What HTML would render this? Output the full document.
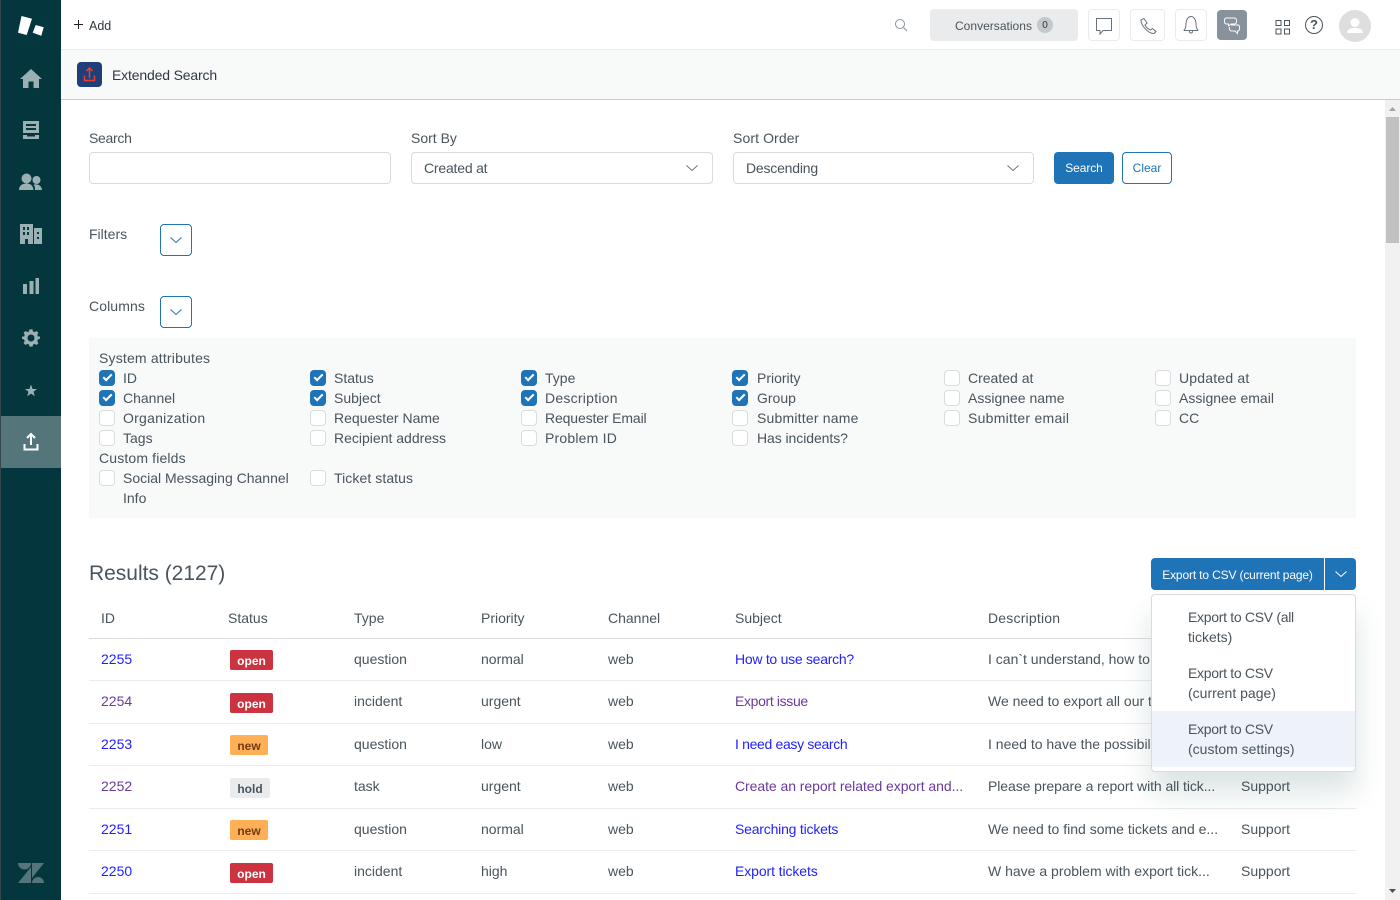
<!DOCTYPE html>
<html>
<head>
<meta charset="utf-8">
<style>
html,body{margin:0;padding:0;width:1400px;height:900px;overflow:hidden;background:#fff;font-family:"Liberation Sans",sans-serif;font-size:14px;color:#49545c}
.t{position:absolute;white-space:nowrap;line-height:20px;height:20px}
.b{position:absolute;box-sizing:border-box}
svg{position:absolute;overflow:visible}
.cb{position:absolute;width:16px;height:16px;box-sizing:border-box;border:1px solid #d8dcde;border-radius:4px;background:#fff}
.cb.c{background:#1f73b7;border-color:#1f73b7}
.cb.c::after{content:"";position:absolute;left:3px;top:3px;width:7px;height:3px;border-left:2px solid #fff;border-bottom:2px solid #fff;transform:rotate(-45deg)}
.ln{position:absolute;left:89px;width:1267px;height:1px;background:#e9ebed}
.a{color:#1f1fff}.v{color:#6a3a9c}
.bd{position:absolute;left:230px;height:20px;line-height:22px;border-radius:2px;font-weight:bold;font-size:12px;text-align:center;box-sizing:border-box}
.open{width:43px;background:#cc3340;color:#fff}
.new{width:38px;background:#ffb057;color:#703b15}
.hold{width:40px;background:#e9ebed;color:#49545c}
.ck{fill:none;stroke:#1f73b7;stroke-width:1}
.ic{fill:none;stroke:#68737d;stroke-width:1}
.sb{fill:#9ab0b3}
</style>
</head>
<body>
<!-- sidebar -->
<div class="b" style="left:0;top:0;width:61px;height:900px;background:#03363d"></div>
<div class="b" style="left:0;top:0;width:1px;height:900px;background:#33474a"></div>
<div class="b" style="left:1px;top:416px;width:60px;height:52px;background:#54767a"></div>
<svg style="left:0;top:0" width="61" height="900">
<path d="M21.500 16L32 18.700L26.700 35L18 32.700z" fill="#fff"/>
<path d="M35.700 25L43.700 27.300L41.300 35.700L32.700 32.700z" fill="#fff"/>
<path class="sb" d="M31 69L42 79H39V88H33.500V81.500H28.500V88H23V79H20z"/>
<path class="sb" d="M23 121H39V133H23zM26 124V126H36V124zM26 128V130H36V128zM23 135H27V136.500H35V135H39V139H23z" fill-rule="evenodd"/>
<circle class="sb" cx="26.500" cy="178.500" r="5"/><circle class="sb" cx="36.500" cy="180" r="4"/>
<path class="sb" d="M19 190C19 185 23 183.500 26.500 183.500C30 183.500 33 185 33.500 190zM35 190C35 187 34.500 185.500 33.500 184.500C37 183.500 41.500 185 42 190z"/>
<path class="sb" d="M20 224H33V244H20zM34 228H42V244H34z"/>
<path d="M23 227h2v3h-2zM27 227h2v3h-2zM23 232h2v3h-2zM27 232h2v3h-2zM37 232h2v2h-2zM37 237h2v2h-2zM25 239h3v5h-3z" fill="#03363d"/>
<path class="sb" d="M23 284H27V294H23zM29.500 281H33.500V294H29.500zM35.500 278H39V294H35.500z"/>
<path class="sb" fill-rule="evenodd" transform="translate(31,338) scale(.78) translate(-31,-340)" d="M29 329H33L33.500 331.500L35.500 332.500L38 331L40.500 333.500L39 336L39.800 338H42.500V341L39.800 342L39 344L40.500 346.500L38 349L35.500 347.500L33.500 348.500L33 351H29L28.500 348.500L26.500 347.500L24 349L21.500 346.500L23 344L22 342L19.500 341V338L22 338L23 336L21.500 333.500L24 331L26.500 332.500L28.500 331.500zM31 335.500A4.500 4.500 0 1 0 31 344.500A4.500 4.500 0 1 0 31 335.500z"/>
<path class="sb" d="M31 384.500L32.600 389H37L33.500 391.800L34.800 396.200L31 393.600L27.200 396.200L28.500 391.800L25 389H29.400z"/>
<path d="M31 434V445M27 438L31 434L35 438M24.500 444V449.500H37.500V444" fill="none" stroke="#fff" stroke-width="2"/>
<path d="M18 863H31A6.500 6.500 0 0 1 18 863zM18 883L31 867V883zM32 878V863H44zM32 883A6 6 0 0 1 44 883z" fill="#54767a"/>
</svg>

<!-- top bar -->
<div class="b" style="left:61px;top:49px;width:1339px;height:1px;background:#e9ebed"></div>
<svg style="left:74px;top:20px" width="10" height="10"><path d="M4.500 0V9M0 4.500H9" stroke="#222" fill="none"/></svg>
<div class="t" style="left:89px;top:16px;font-size:12.500px;color:#2f3941">Add</div>
<svg style="left:894px;top:18px" width="14" height="14"><circle cx="6" cy="6" r="4.500" fill="none" stroke="#87929d"/><path d="M9.500 9.500L13 13" stroke="#87929d"/></svg>
<div class="b" style="left:930px;top:9px;width:148px;height:32px;background:#e9ebed;border-radius:4px"></div>
<div class="t" style="left:955px;top:16px;font-size:12px;letter-spacing:.02px;color:#49545c">Conversations</div>
<div class="b" style="left:1037px;top:17px;width:16px;height:16px;border-radius:8px;background:#c2c8cc;text-align:center;line-height:17px;font-size:10px;color:#2f3941">0</div>
<div class="b" style="left:1088px;top:9px;width:32px;height:32px;border:1px solid #e9ebed;border-radius:4px"></div>
<div class="b" style="left:1130px;top:9px;width:35px;height:32px;border:1px solid #e9ebed;border-radius:4px"></div>
<div class="b" style="left:1175px;top:9px;width:32px;height:32px;border:1px solid #e9ebed;border-radius:4px"></div>
<div class="b" style="left:1217px;top:10px;width:30px;height:30px;background:#87929d;border-radius:4px"></div>
<svg style="left:0;top:0" width="1400" height="50">
<path class="ic" d="M1096.500 18.500H1111.500V30.500H1103L1100 34V30.500H1096.500z"/>
<path class="ic" d="M1141 20L1144 18.500L1147 23L1145 25C1146 27 1148 29 1150.500 30L1152.500 28.500L1156 31.500L1154 33.500C1149 34 1141 26 1141 20zM1144 18.500L1147 23M1152.500 28.500L1156 31.500"/>
<path class="ic" d="M1184.500 29.500C1186 28 1186 25.500 1186 23.500C1186 20 1188 16.500 1191 16.500C1194 16.500 1196 20 1196 23.500C1196 25.500 1196 28 1197.500 29.500C1198.500 30.500 1198 30.500 1197 30.500H1185C1184 30.500 1183.500 30.500 1184.500 29.500zM1189.500 30.500V31.500A1.500 1.500 0 0 0 1192.500 31.500V30.500"/>
<path d="M1226.500 18H1234C1235.500 18 1236.500 19 1236.500 20.500V21.500C1236.500 23 1235.500 24 1234 24H1231L1228.500 26V24H1226.500C1225 24 1224.500 23 1224.500 21.500V20.500C1224.500 19 1225 18 1226.500 18z" fill="none" stroke="#fff" stroke-width=".9"/>
<path d="M1231 25H1237.500C1239 25 1239.500 26 1239.500 27V28.500C1239.500 30 1239 31 1237.500 31V33.500L1235 31H1231.500C1230 31 1229.500 30 1229.500 28.500V27" fill="none" stroke="#fff" stroke-width=".9"/>
<path d="M1276 20.500h5v5h-5zM1284.500 20.500h5v5h-5zM1276 29h5v5h-5zM1284.500 29h5v5h-5z" fill="none" stroke="#49545c"/>
<circle cx="1314" cy="25" r="8.500" fill="none" stroke="#49545c"/>
</svg>
<div class="t" style="left:1310px;top:15px;font-size:13px;color:#49545c;font-weight:bold">?</div>
<div class="b" style="left:1339px;top:10px;width:32px;height:32px;border-radius:16px;background:#dedede"></div>
<svg style="left:1339px;top:10px" width="32" height="32"><circle cx="16" cy="12.500" r="4.500" fill="#fff"/><path d="M8 23C8 19 12 18 16 18C20 18 24 19 24 23z" fill="#fff"/></svg>

<!-- sub header -->
<div class="b" style="left:61px;top:50px;width:1339px;height:50px;background:#f8f9f9;border-bottom:1px solid #c9cccd"></div>
<div class="b" style="left:77px;top:62px;width:25px;height:25px;background:#1f3f7a;border-radius:4px"></div>
<svg style="left:77px;top:62px" width="25" height="25"><path d="M12.500 6V16M9.500 9L12.500 6L15.500 9M7.500 13.500V18.500H17.500V13.500" fill="none" stroke="#e8402f" stroke-width="1.500"/></svg>
<div class="t" style="left:112px;top:65px;color:#2f3941;letter-spacing:-.16px">Extended Search</div>

<!-- form -->
<div class="t" style="left:89px;top:128px;letter-spacing:-.3px">Search</div>
<div class="t" style="left:411px;top:128px">Sort By</div>
<div class="t" style="left:733px;top:128px;letter-spacing:.1px">Sort Order</div>
<div class="b" style="left:89px;top:152px;width:302px;height:32px;border:1px solid #d8dcde;border-radius:4px"></div>
<div class="b" style="left:411px;top:152px;width:302px;height:32px;border:1px solid #d8dcde;border-radius:4px"></div>
<div class="b" style="left:733px;top:152px;width:301px;height:32px;border:1px solid #d8dcde;border-radius:4px"></div>
<div class="t" style="left:424px;top:158px;letter-spacing:-.2px">Created at</div>
<div class="t" style="left:746px;top:158px;letter-spacing:-.2px">Descending</div>
<svg style="left:0;top:0" width="1400" height="340">
<path d="M686.500 165.500L692 170.500L697.500 165.500M1007.500 165.500L1013 170.500L1018.500 165.500" fill="none" stroke="#68737d"/>
<path class="ck" d="M170.500 237.500L176 242.500L181.500 237.500M170.500 309.500L176 314.500L181.500 309.500"/>
</svg>
<div class="b" style="left:1054px;top:152px;width:60px;height:32px;background:#1f73b7;border-radius:4px;color:#fff;text-align:center;line-height:33px;font-size:12px;letter-spacing:-.1px">Search</div>
<div class="b" style="left:1122px;top:152px;width:50px;height:32px;border:1px solid #1f73b7;border-radius:4px;color:#1f73b7;text-align:center;line-height:31px;font-size:12px">Clear</div>
<div class="t" style="left:89px;top:224px">Filters</div>
<div class="b" style="left:160px;top:224px;width:32px;height:32px;border:1px solid #1f73b7;border-radius:4px"></div>
<div class="t" style="left:89px;top:296px;letter-spacing:.1px">Columns</div>
<div class="b" style="left:160px;top:296px;width:32px;height:32px;border:1px solid #1f73b7;border-radius:4px"></div>

<!-- columns panel -->
<div class="b" style="left:89px;top:338px;width:1267px;height:180px;background:#f8f9f9"></div>
<div class="t" style="left:99px;top:348px;letter-spacing:.18px">System attributes</div>
<div class="cb c" style="left:99px;top:370px"></div><div class="t" style="left:123px;top:368px">ID</div>
<div class="cb c" style="left:310px;top:370px"></div><div class="t" style="left:334px;top:368px">Status</div>
<div class="cb c" style="left:521px;top:370px"></div><div class="t" style="left:545px;top:368px">Type</div>
<div class="cb c" style="left:732px;top:370px"></div><div class="t" style="left:757px;top:368px">Priority</div>
<div class="cb" style="left:944px;top:370px"></div><div class="t" style="left:968px;top:368px">Created at</div>
<div class="cb" style="left:1155px;top:370px"></div><div class="t" style="left:1179px;top:368px;letter-spacing:.2px">Updated at</div>
<div class="cb c" style="left:99px;top:390px"></div><div class="t" style="left:123px;top:388px">Channel</div>
<div class="cb c" style="left:310px;top:390px"></div><div class="t" style="left:334px;top:388px">Subject</div>
<div class="cb c" style="left:521px;top:390px"></div><div class="t" style="left:545px;top:388px;letter-spacing:.25px">Description</div>
<div class="cb c" style="left:732px;top:390px"></div><div class="t" style="left:757px;top:388px">Group</div>
<div class="cb" style="left:944px;top:390px"></div><div class="t" style="left:968px;top:388px">Assignee name</div>
<div class="cb" style="left:1155px;top:390px"></div><div class="t" style="left:1179px;top:388px">Assignee email</div>
<div class="cb" style="left:99px;top:410px"></div><div class="t" style="left:123px;top:408px;letter-spacing:.25px">Organization</div>
<div class="cb" style="left:310px;top:410px"></div><div class="t" style="left:334px;top:408px">Requester Name</div>
<div class="cb" style="left:521px;top:410px"></div><div class="t" style="left:545px;top:408px;letter-spacing:-.13px">Requester Email</div>
<div class="cb" style="left:732px;top:410px"></div><div class="t" style="left:757px;top:408px;letter-spacing:.2px">Submitter name</div>
<div class="cb" style="left:944px;top:410px"></div><div class="t" style="left:968px;top:408px;letter-spacing:.27px">Submitter email</div>
<div class="cb" style="left:1155px;top:410px"></div><div class="t" style="left:1179px;top:408px">CC</div>
<div class="cb" style="left:99px;top:430px"></div><div class="t" style="left:123px;top:428px">Tags</div>
<div class="cb" style="left:310px;top:430px"></div><div class="t" style="left:334px;top:428px">Recipient address</div>
<div class="cb" style="left:521px;top:430px"></div><div class="t" style="left:545px;top:428px;letter-spacing:.2px">Problem ID</div>
<div class="cb" style="left:732px;top:430px"></div><div class="t" style="left:757px;top:428px;letter-spacing:-.07px">Has incidents?</div>
<div class="t" style="left:99px;top:448px;letter-spacing:.15px">Custom fields</div>
<div class="cb" style="left:99px;top:470px"></div><div class="t" style="left:123px;top:468px">Social Messaging Channel</div>
<div class="t" style="left:123px;top:488px">Info</div>
<div class="cb" style="left:310px;top:470px"></div><div class="t" style="left:334px;top:468px;letter-spacing:.08px">Ticket status</div>

<!-- results -->
<div class="t" style="left:89px;top:559px;height:30px;line-height:30px;font-size:21px;letter-spacing:-.02px">Results (2127)</div>
<div class="b" style="left:1151px;top:558px;width:173px;height:32px;background:#1f73b7;border-radius:4px 0 0 4px;color:#fff;text-align:center;line-height:34px;font-size:12px;letter-spacing:-.15px">Export to CSV (current page)</div>
<div class="b" style="left:1325px;top:558px;width:31px;height:32px;background:#1f73b7;border-radius:0 4px 4px 0"></div>
<svg style="left:1335px;top:571px" width="12" height="7"><path d="M.5 .5L6 5.500L11.500 .5" fill="none" stroke="#fff"/></svg>

<div class="t" style="left:101px;top:608px">ID</div>
<div class="t" style="left:228px;top:608px">Status</div>
<div class="t" style="left:354px;top:608px">Type</div>
<div class="t" style="left:481px;top:608px">Priority</div>
<div class="t" style="left:608px;top:608px">Channel</div>
<div class="t" style="left:735px;top:608px">Subject</div>
<div class="t" style="left:988px;top:608px;letter-spacing:.2px">Description</div>
<div class="b" style="left:89px;top:638px;width:1267px;height:1px;background:#d8dcde"></div>
<div class="ln" style="top:680px"></div>
<div class="ln" style="top:723px"></div>
<div class="ln" style="top:765px"></div>
<div class="ln" style="top:808px"></div>
<div class="ln" style="top:850px"></div>
<div class="ln" style="top:893px"></div>

<div class="t a" style="left:101px;top:649px">2255</div><div class="bd open" style="top:650px">open</div>
<div class="t" style="left:354px;top:649px">question</div><div class="t" style="left:481px;top:649px">normal</div><div class="t" style="left:608px;top:649px">web</div>
<div class="t a" style="left:735px;top:649px;letter-spacing:-.27px">How to use search?</div><div class="t" style="left:988px;top:649px">I can`t understand, how to use this search</div>

<div class="t v" style="left:101px;top:691px">2254</div><div class="bd open" style="top:693px">open</div>
<div class="t" style="left:354px;top:691px">incident</div><div class="t" style="left:481px;top:691px">urgent</div><div class="t" style="left:608px;top:691px">web</div>
<div class="t v" style="left:735px;top:691px;letter-spacing:-.35px">Export issue</div><div class="t" style="left:988px;top:691px">We need to export all our tickets</div>

<div class="t a" style="left:101px;top:734px">2253</div><div class="bd new" style="top:735px">new</div>
<div class="t" style="left:354px;top:734px">question</div><div class="t" style="left:481px;top:734px">low</div><div class="t" style="left:608px;top:734px">web</div>
<div class="t a" style="left:735px;top:734px;letter-spacing:-.33px">I need easy search</div><div class="t" style="left:988px;top:734px">I need to have the possibility to search</div>

<div class="t v" style="left:101px;top:776px">2252</div><div class="bd hold" style="top:778px">hold</div>
<div class="t" style="left:354px;top:776px">task</div><div class="t" style="left:481px;top:776px">urgent</div><div class="t" style="left:608px;top:776px">web</div>
<div class="t v" style="left:735px;top:776px;letter-spacing:-.06px">Create an report related export and...</div><div class="t" style="left:988px;top:776px;letter-spacing:-.08px">Please prepare a report with all tick...</div><div class="t" style="left:1241px;top:776px">Support</div>

<div class="t a" style="left:101px;top:819px">2251</div><div class="bd new" style="top:820px">new</div>
<div class="t" style="left:354px;top:819px">question</div><div class="t" style="left:481px;top:819px">normal</div><div class="t" style="left:608px;top:819px">web</div>
<div class="t a" style="left:735px;top:819px;letter-spacing:-.2px">Searching tickets</div><div class="t" style="left:988px;top:819px">We need to find some tickets and e...</div><div class="t" style="left:1241px;top:819px">Support</div>

<div class="t a" style="left:101px;top:861px">2250</div><div class="bd open" style="top:863px">open</div>
<div class="t" style="left:354px;top:861px">incident</div><div class="t" style="left:481px;top:861px">high</div><div class="t" style="left:608px;top:861px">web</div>
<div class="t a" style="left:735px;top:861px;letter-spacing:-.1px">Export tickets</div><div class="t" style="left:988px;top:861px">W have a problem with export tick...</div><div class="t" style="left:1241px;top:861px">Support</div>

<!-- dropdown -->
<div class="b" style="left:1151px;top:594px;width:205px;height:178px;background:#fff;border:1px solid #d8dcde;border-radius:4px;box-shadow:0 20px 28px 0 rgba(23,73,77,.15)"></div>
<div class="b" style="left:1152px;top:711px;width:203px;height:56px;background:#edf3f9"></div>
<div class="t" style="left:1188px;top:607px;letter-spacing:-.3px">Export to CSV (all</div>
<div class="t" style="left:1188px;top:627px">tickets)</div>
<div class="t" style="left:1188px;top:663px;letter-spacing:-.3px">Export to CSV</div>
<div class="t" style="left:1188px;top:683px">(current page)</div>
<div class="t" style="left:1188px;top:719px;letter-spacing:-.3px">Export to CSV</div>
<div class="t" style="left:1188px;top:739px">(custom settings)</div>

<!-- scrollbar -->
<div class="b" style="left:1385px;top:100px;width:15px;height:800px;background:#f1f1f1"></div>
<div class="b" style="left:1386px;top:117px;width:13px;height:126px;background:#c1c1c1"></div>
<svg style="left:1385px;top:100px" width="15" height="800"><path d="M4 11L7.500 7L11 11z" fill="#a3a3a3"/><path d="M4 789L7.500 793L11 789z" fill="#505050"/></svg>
</body>
</html>
